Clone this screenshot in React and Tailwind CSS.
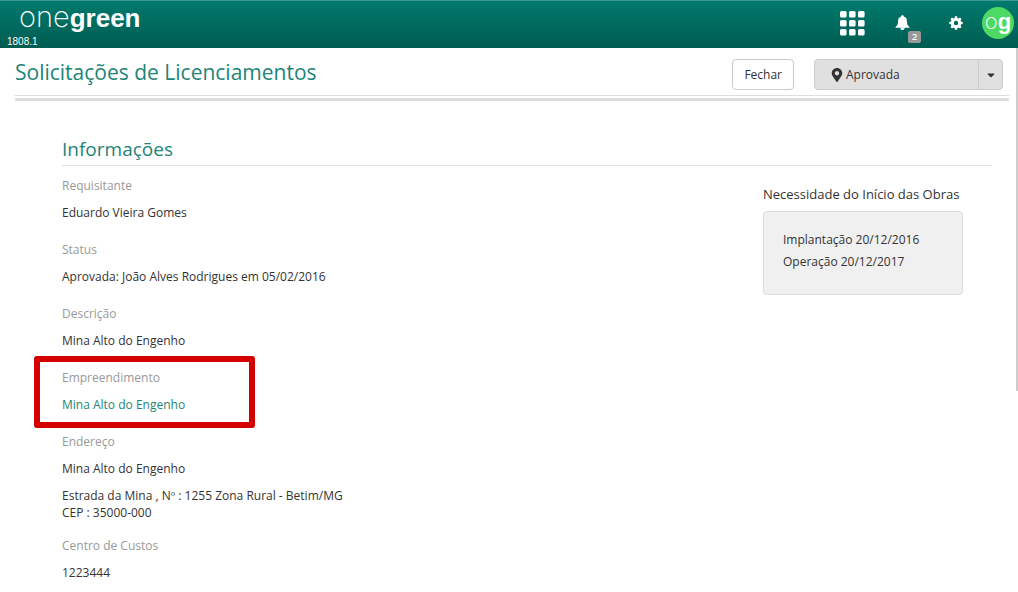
import React from "react";
import { FaMapMarkerAlt, FaCaretDown } from "react-icons/fa";

const cells = [0, 9, 18];
const teeth = [0, 45, 90, 135];

function GridIcon() {
  return (
    <svg viewBox="0 0 25 25" className="size-[25px]" fill="currentColor" aria-hidden="true">
      {cells.map((y) => cells.map((x) => <rect key={`${x}-${y}`} x={x} y={y} width="6.6" height="6.6" rx="1.6" />))}
    </svg>
  );
}

function BellIcon() {
  return (
    <svg viewBox="0 0 15 16" className="h-4 w-[15px]" fill="currentColor" aria-hidden="true">
      <path d="M7.5 0.3c.8 0 1.3.5 1.3 1.3 2 .6 3.1 2.2 3.1 4.4 0 3.2.6 4.3 2 5.4.5.4.6.7.6 1.400H.5c0-.7.1-1 .6-1.400 1.400-1.100 2-2.200 2-5.400 0-2.200 1.100-3.800 3.100-4.400 0-.8.5-1.300 1.300-1.300z" />
      <path d="M5.300 12.800h4.400c-.2 1.500-1 2.300-2.200 2.300s-2-.8-2.200-2.300z" />
    </svg>
  );
}

function GearIcon() {
  return (
    <svg viewBox="0 0 14 14" className="size-[14px]" fill="currentColor" aria-hidden="true">
      <circle cx="7" cy="7" r="3.700" fill="none" stroke="currentColor" strokeWidth="3" />
      {teeth.map((a) => (
        <g key={a} transform={`rotate(${a} 7 7)`}>
          <path d="M5.600 2.600 5.900.3h2.200l.3 2.300zM5.600 11.400l.3 2.300h2.200l.3-2.300z" />
        </g>
      ))}
    </svg>
  );
}

function Field({ label, children, className = "" }) {
  return (
    <div className={`relative ${className}`}>
      <dt className="text-[#999999]">{label}</dt>
      {children}
    </div>
  );
}

function Value({ children }) {
  return <dd className="mt-[10px]">{children}</dd>;
}

export default function App() {
  return (
    <div className="relative min-h-screen bg-white font-['Open_Sans','Noto_Sans',sans-serif] text-[12px] leading-[17px] text-[#333333]">
      <header className="flex h-12 justify-between border-t border-[#3f9a8e] bg-linear-to-b from-[#007a6d] to-[#005c51] text-white">
        <div className="flex flex-col justify-between pl-[7px] font-['Liberation_Sans',Arial,sans-serif]">
          <a href="#" className="flex items-baseline pl-3 leading-[31px]">
            <span className="font-['Inter',sans-serif] text-[29px] font-extralight">one</span>
            <span className="text-[26px] font-bold">green</span>
          </a>
          <span className="pb-px text-[10px] leading-[10px]">1808.1</span>
        </div>
        <nav className="flex items-center pr-1 pb-[3px]">
          <button type="button" aria-label="Aplicativos" className="mr-[30px]"><GridIcon /></button>
          <button type="button" aria-label="Notificações" className="relative mr-[39px]">
            <BellIcon />
            <span className="absolute top-4 left-[13px] h-3 w-[13px] rounded-[2px] bg-[#999999] text-center text-[9px] leading-[12px] font-semibold">2</span>
          </button>
          <button type="button" aria-label="Configurações" className="mr-[19px]"><GearIcon /></button>
          <button type="button" aria-label="Perfil" className="flex size-8 items-baseline justify-center rounded-full bg-[#4cd964] text-[22px] leading-[28px]">
            <span className="font-['Inter',sans-serif] font-extralight">o</span>
            <span className="font-['Liberation_Sans',Arial,sans-serif] font-bold">g</span>
          </button>
        </nav>
      </header>

      <main className="pr-[9px] pl-[15px]">
        <div className="flex h-12 items-center justify-between border-b border-[#dddddd] pr-[6px]">
          <h1 className="text-[21px] leading-[30px] text-[#1d8577]">Solicitações de Licenciamentos</h1>
          <div className="mt-[6px] flex gap-5">
            <button type="button" className="h-[31px] rounded-[4px] border border-[#cccccc] bg-white px-[11px]">Fechar</button>
            <div className="flex h-[31px] w-[189px] rounded-[4px] border border-[#cccccc] bg-[#e0e0e0]">
              <button type="button" className="flex flex-1 items-center gap-[2px] pl-[15px]">
                <FaMapMarkerAlt className="size-[14px]" />
                Aprovada
              </button>
              <button type="button" aria-label="Mais opções" className="flex w-6 items-center justify-center border-l border-[#cccccc]">
                <FaCaretDown className="size-3" />
              </button>
            </div>
          </div>
        </div>
        <div className="mt-[2px] h-[3px] bg-[#dddddd]" />

        <section className="mt-9 mr-[17px] ml-[47px]">
          <h2 className="border-b border-[#e0e0e0] pb-1 text-[19px] leading-6 text-[#1d8577]">Informações</h2>
          <div className="flex justify-between">
            <dl className="mt-[11px] flex flex-col gap-5">
              <Field label="Requisitante"><Value>Eduardo Vieira Gomes</Value></Field>
              <Field label="Status"><Value>Aprovada: João Alves Rodrigues em 05/02/2016</Value></Field>
              <Field label="Descrição"><Value>Mina Alto do Engenho</Value></Field>
              <Field label="Empreendimento">
                <Value><a href="#" className="text-[#1d8577]">Mina Alto do Engenho</a></Value>
                <div className="pointer-events-none absolute -top-[13px] -left-7 h-[72px] w-[221px] rounded-[3px] border-6 border-[#d40000]" />
              </Field>
              <Field label="Endereço">
                <Value>Mina Alto do Engenho</Value>
                <Value>Estrada da Mina , Nº : 1255 Zona Rural - Betim/MG<br />CEP : 35000-000</Value>
              </Field>
              <Field label="Centro de Custos" className="-mt-1"><Value>1223444</Value></Field>
            </dl>
            <aside className="mt-[18px] mr-[29px]">
              <h3 className="text-[13px] leading-5">Necessidade do Início das Obras</h3>
              <div className="mt-[7px] h-[84px] w-[200px] rounded-[4px] border border-[#dddddd] bg-[#f0f0f0] px-[19px] py-[17px] leading-[22px]">
                <p>Implantação 20/12/2016</p>
                <p>Operação 20/12/2017</p>
              </div>
            </aside>
          </div>
        </section>
      </main>
      <div className="absolute top-12 right-0 h-[343px] w-[2px] bg-[#cccccc]" />
    </div>
  );
}
